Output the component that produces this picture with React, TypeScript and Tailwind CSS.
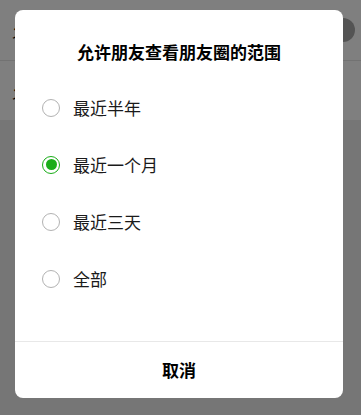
import { useState } from 'react';

const options = ['最近半年', '最近一个月', '最近三天', '全部'];

function Radio({ checked }: { checked: boolean }) {
  if (checked) {
    return (
      <span className="flex h-[18px] w-[18px] shrink-0 items-center justify-center rounded-full border-[1.5px] border-[#1aad19]">
        <span className="h-[11px] w-[11px] rounded-full bg-[#1aad19]" />
      </span>
    );
  }
  return <span className="h-[18px] w-[18px] shrink-0 rounded-full border-[1.5px] border-[#b2b2b2]" />;
}

export default function App() {
  const [selected, setSelected] = useState(1);

  return (
    <div className="relative h-[415px] w-[361px] overflow-hidden bg-[#ededed] font-['Noto_Sans_CJK_SC',sans-serif]">
      {/* page underneath, only its edges show */}
      <div className="bg-white">
        <div className="flex h-[61px] items-center justify-between border-b border-[#e5e5e5] pl-[12px] pr-[6px] text-[17px] text-black">
          <span>允</span>
          <span className="h-[24px] w-[24px] rounded-full bg-[#a8a8a8]" />
        </div>
        <div className="flex h-[59px] items-center pl-[12px] text-[17px] text-black">
          <span>允</span>
        </div>
      </div>

      {/* mask + dialog */}
      <div className="absolute inset-0 bg-black/50">
        <div className="ml-[15px] mt-[10px] flex h-[388px] w-[328px] flex-col rounded-[8px] bg-white">
          <div className="pt-[30px] text-center text-[17px] font-bold leading-[24px] text-black">
            允许朋友查看朋友圈的范围
          </div>
          <div className="mt-[15px]">
            {options.map((o, i) => (
              <div
                key={o}
                onClick={() => setSelected(i)}
                className="flex h-[57px] items-center gap-[13px] px-[27px] text-[17px] text-[#1a1a1a]"
              >
                <Radio checked={selected === i} />
                <span>{o}</span>
              </div>
            ))}
          </div>
          <div className="flex-1" />
          <div className="flex h-[57px] items-center justify-center border-t border-[#e8e8e8] text-[17px] font-bold text-black">
            取消
          </div>
        </div>
      </div>
    </div>
  );
}
